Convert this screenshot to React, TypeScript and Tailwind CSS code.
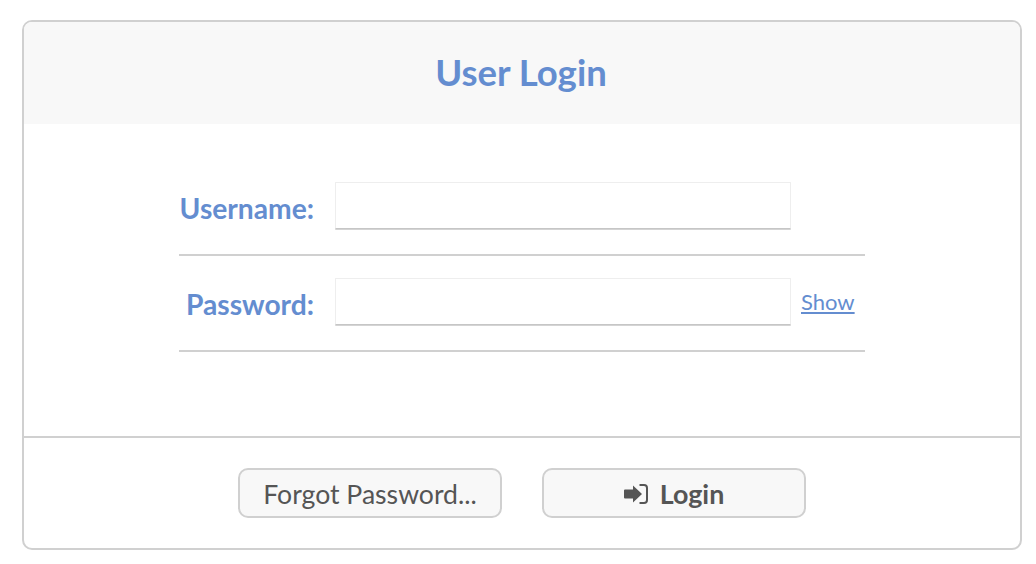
function LoginIcon() {
  return (
    <svg width="24" height="20" viewBox="0 0 24 20" className="shrink-0">
      <path d="M1 5.5H9V1.5L18 10L9 18.5V14.5H1A1 1 0 0 1 0 13.5V6.5A1 1 0 0 1 1 5.5Z" fill="currentColor" />
      <path d="M15.5 1H20A3 3 0 0 1 23 4V16A3 3 0 0 1 20 19H15.5" fill="none" stroke="currentColor" strokeWidth="2" />
    </svg>
  )
}

function Field({ label, children }: { label: string; children?: React.ReactNode }) {
  return (
    <div className="mb-[22px] flex items-start border-b-2 border-[#d0d0d0] pb-[24px]">
      <label className="h-[48px] w-[135px] whitespace-nowrap text-right text-[28.2px] leading-[52px] font-bold text-[#648dd0]">{label}</label>
      <input className="ml-[21px] h-[47px] w-[456px] rounded-[1px] border border-[#eeeeee] border-b-[#c6c6c6] bg-white shadow-[0_1px_0_#d4d4d4]" />
      {children}
    </div>
  )
}

export default function App() {
  return (
    <div className="h-[564px] w-[1036px] bg-white pl-[22px] pt-[20px] font-['Lato',sans-serif]">
      <div className="flex h-[530px] w-[1000px] flex-col overflow-hidden rounded-[10px] border-2 border-[#d0d0d0]">
        {/* Header */}
        <div className="flex h-[102px] items-center justify-center bg-[#f8f8f8] pb-[2px] pr-[2px] text-[36.5px] font-bold text-[#648dd0]">
          User Login
        </div>

        {/* Form */}
        <div className="flex-1 pl-[155px] pt-[58px]">
          <div className="w-[686px]">
            <Field label="Username:" />
            <Field label="Password:">
              <a href="#" className="ml-[10px] text-[22px] leading-[48px] text-[#648dd0] underline">Show</a>
            </Field>
          </div>
        </div>

        {/* Footer */}
        <div className="flex h-[112px] justify-center gap-[40px] border-t-2 border-[#d0d0d0] pt-[30px]">
          <button className="h-[50px] w-[264px] rounded-[10px] border-2 border-[#d0d0d0] bg-[#f8f8f8] pt-[4px] text-[26.6px] text-[#555555]">
            Forgot Password...
          </button>
          <button className="flex h-[50px] w-[264px] items-center justify-center gap-[12px] rounded-[10px] border-2 border-[#d0d0d0] bg-[#f8f8f8] pt-[2px] text-[26.8px] font-bold text-[#555555]">
            <LoginIcon />
            Login
          </button>
        </div>
      </div>
    </div>
  )
}
